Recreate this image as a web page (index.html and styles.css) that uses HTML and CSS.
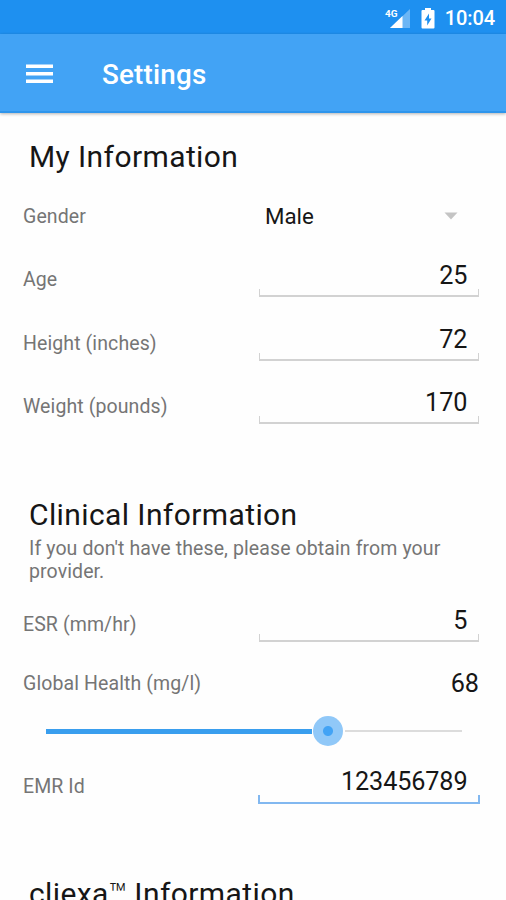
FILE: index.html
```html
<!DOCTYPE html>
<html lang="en">
<head>
<meta charset="utf-8">
<title>Settings</title>
<link rel="stylesheet" href="styles.css">
</head>
<body>
<div class="screen">
  <div class="status">
    <svg class="signal" width="27" height="24" viewBox="0 0 27 24">
      <path d="M26 3V22H6Z" fill="#fff" fill-opacity=".35"/>
      <path d="M18.500 10V22H6Z" fill="#fff"/>
      <path d="M0 2H13V12H0Z" fill="#1e90f0"/>
      <text class="net" x="1" y="10.5" textLength="12.500" lengthAdjust="spacingAndGlyphs">4G</text>
    </svg>
    <svg class="battery" width="14" height="21" viewBox="0 0 14 21">
      <path fill="#fff" fill-rule="evenodd" d="M4 0H10V2H12.5Q13.5 2 13.5 3V19.500Q13.500 20.500 12.500 20.500H1.500Q.5 20.500 .5 19.500V3Q.5 2 1.500 2H4ZM8 5.500L3.500 12.500H6.200V17.500L10.500 10.500H8Z"/>
    </svg>
    <span class="clock">10:04</span>
  </div>
  <header class="bar">
    <svg class="menu" width="27" height="20" viewBox="0 0 27 20" fill="#fff"><path d="M0 .5H27V4H0ZM0 8H27V11.500H0ZM0 15.500H27V19H0Z"/></svg>
    <h1 class="title">Settings</h1>
  </header>
  <main class="content">
    <h2 class="heading">My Information</h2>
    <div class="row gender"><span class="label">Gender</span><div class="select"><span>Male</span><svg width="14" height="8" viewBox="0 0 14 8"><path d="M.5 .5H13.500L7 7.500Z" fill="#c4c4c4"/></svg></div></div>
    <div class="row"><span class="label">Age</span><div class="field">25</div></div>
    <div class="row"><span class="label">Height (inches)</span><div class="field">72</div></div>
    <div class="row"><span class="label">Weight (pounds)</span><div class="field">170</div></div>
    <h2 class="heading clinical">Clinical Information</h2>
    <p class="note">If you don't have these, please obtain from your<br>provider.</p>
    <div class="row esr"><span class="label">ESR (mm/hr)</span><div class="field">5</div></div>
    <div class="row global"><span class="label">Global Health (mg/l)</span><div class="reading">68</div></div>
    <div class="slider"><div class="fill"></div><div class="thumb"></div><div class="rest"></div></div>
    <div class="row emr"><span class="label">EMR Id</span><div class="field active">123456789</div></div>
    <h2 class="heading about">cliexa<span class="mark">™</span> Information</h2>
  </main>
</div>
</body>
</html>
```
FILE: styles.css
```css
* { box-sizing: border-box; }
body { margin: 0; background: #fff; overflow: hidden; font-family: Roboto, "Liberation Sans", sans-serif; color: #161616; }
.screen { height: 900px; overflow: hidden; background: #fefefe; }
.status { height: 34px; background: #1e90f0; display: flex; align-items: center; justify-content: flex-end; padding: 2px 11px 0 0; color: #fff; }
.signal { margin-right: 10px; }
.net { font: 700 9.500px Roboto, sans-serif; fill: #fff; }
.battery { margin-right: 10px; }
.clock { font-size: 20px; font-weight: 500; line-height: 24px; letter-spacing: -.1px; }
.bar { height: 79px; background: #42a3f5; border-bottom: 2px solid #2e95ec; box-shadow: 0 1px 3px rgba(0,0,0,.3); display: flex; align-items: center; padding-left: 26px; }
.menu { margin-right: 49px; margin-top: 2px; }
.title { margin: 4px 0 0; font-size: 27.800px; line-height: 32px; font-weight: 500; letter-spacing: .2px; color: #fff; }
.content { padding: 26px 27px 0 23px; }
.heading { margin: 0 0 0 6px; font-size: 30px; line-height: 35px; font-weight: 400; letter-spacing: .4px; white-space: nowrap; }
.mark { font-weight: 300; letter-spacing: -.8px; }
.row { height: 63.300px; display: grid; grid-template-columns: 236px 1fr; align-items: center; }
.gender { margin-top: 11.400px; }
.label { font-size: 19.500px; line-height: 24px; letter-spacing: .1px; color: #757575; white-space: nowrap; }
.select { display: flex; align-items: center; justify-content: space-between; padding: 0 21px 2px 6px; font-size: 22.300px; line-height: 26px; }
.field { position: relative; height: 42px; padding-right: 11.500px; text-align: right; font-size: 25.200px; line-height: 39px; margin-top: -6px; }
.field::after { content: ""; position: absolute; left: 0; right: 0; bottom: 1px; height: 6px; border: 1px solid #d2d2d2; border-top: 0; border-bottom-width: 2px; }
.field.active { letter-spacing: -.1px; line-height: 38px; }
.field.active::after { left: -1px; right: -1px; height: 7px; border: 2px solid #82b8f0; border-top: 0; }
.clinical { margin-top: 58.600px; }
.note { margin: 5px 0 0 6px; font-size: 19.500px; line-height: 23px; letter-spacing: .1px; color: #757575; white-space: nowrap; }
.esr { margin-top: 10px; }
.global { height: 55.500px; }
.reading { text-align: right; font-size: 25.200px; line-height: 30px; }
.slider { height: 30px; margin: 4.500px 17px 0 23px; display: flex; align-items: center; }
.fill { width: 266px; height: 5px; background: #399eee; }
.thumb { width: 30px; height: 30px; margin: 0 2px 0 1px; border-radius: 50%; background: radial-gradient(circle, #42a3f5 4.500px, #90c8f8 5.500px); }
.rest { flex: 1; height: 2px; background: #dcdcdc; }
.emr { margin-top: 8.500px; }
.about { margin-top: 58px; }
```
